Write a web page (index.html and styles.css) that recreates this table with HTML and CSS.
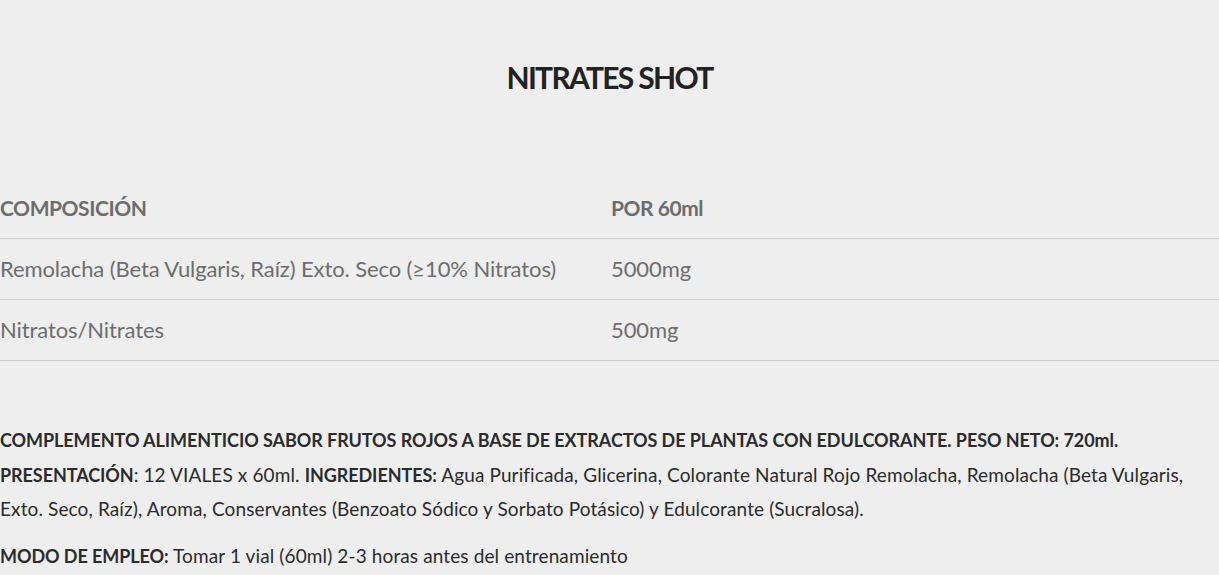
FILE: index.html
```html
<!DOCTYPE html>
<html lang="es">
<head>
<meta charset="utf-8">
<title>Nitrates Shot</title>
<link rel="stylesheet" href="styles.css">
</head>
<body>
<main class="product">
  <h1 class="product-title">NITRATES SHOT</h1>
  <div class="composition">
    <div class="comp-row comp-head">
      <div class="comp-cell">COMPOSICIÓN</div>
      <div class="comp-cell">POR 60ml</div>
    </div>
    <div class="comp-row">
      <div class="comp-cell">Remolacha (Beta Vulgaris, Raíz) Exto. Seco (≥10% Nitratos)</div>
      <div class="comp-cell">5000mg</div>
    </div>
    <div class="comp-row">
      <div class="comp-cell">Nitratos/Nitrates</div>
      <div class="comp-cell">500mg</div>
    </div>
  </div>
  <div class="description">
    <p><strong>COMPLEMENTO ALIMENTICIO SABOR FRUTOS ROJOS A BASE DE EXTRACTOS DE PLANTAS CON EDULCORANTE. PESO NETO: 720ml.</strong><br><strong>PRESENTACIÓN</strong>: 12 VIALES x 60ml. <strong>INGREDIENTES:</strong> Agua Purificada, Glicerina, Colorante Natural Rojo Remolacha, Remolacha (Beta Vulgaris, Exto. Seco, Raíz), Aroma, Conservantes (Benzoato Sódico y Sorbato Potásico) y Edulcorante (Sucralosa).</p>
    <p><strong>MODO DE EMPLEO:</strong> Tomar 1 vial (60ml) 2-3 horas antes del entrenamiento</p>
  </div>
</main>
</body>
</html>
```
FILE: styles.css
```css
html, body {
  margin: 0;
  padding: 0;
  background: #eeeeee;
}
body {
  font-family: Lato, "Noto Sans", sans-serif;
}
.product {
  padding-top: 59px;
}
.product-title {
  margin: 0;
  text-align: center;
  font-size: 30px;
  line-height: 36px;
  font-weight: 700;
  letter-spacing: -1.7px;
  color: #222222;
}
.composition {
  margin-top: 83px;
  color: #6d6d6d;
  font-size: 22px;
  letter-spacing: -0.1px;
}
.comp-row {
  display: grid;
  grid-template-columns: 611px 1fr;
  height: 60px;
  line-height: 60px;
  border-bottom: 1px solid #cccccc;
}
.comp-head {
  font-weight: 700;
  font-size: 21px;
  letter-spacing: -0.45px;
}
.comp-cell {
  white-space: nowrap;
}
.description {
  margin-top: 62px;
  font-size: 19px;
  line-height: 34.5px;
  letter-spacing: 0.12px;
  color: #2b2b2b;
}
.description p {
  margin: 0 0 12px;
}
.description strong {
  font-size: 18px;
  letter-spacing: -0.07px;
}
```
